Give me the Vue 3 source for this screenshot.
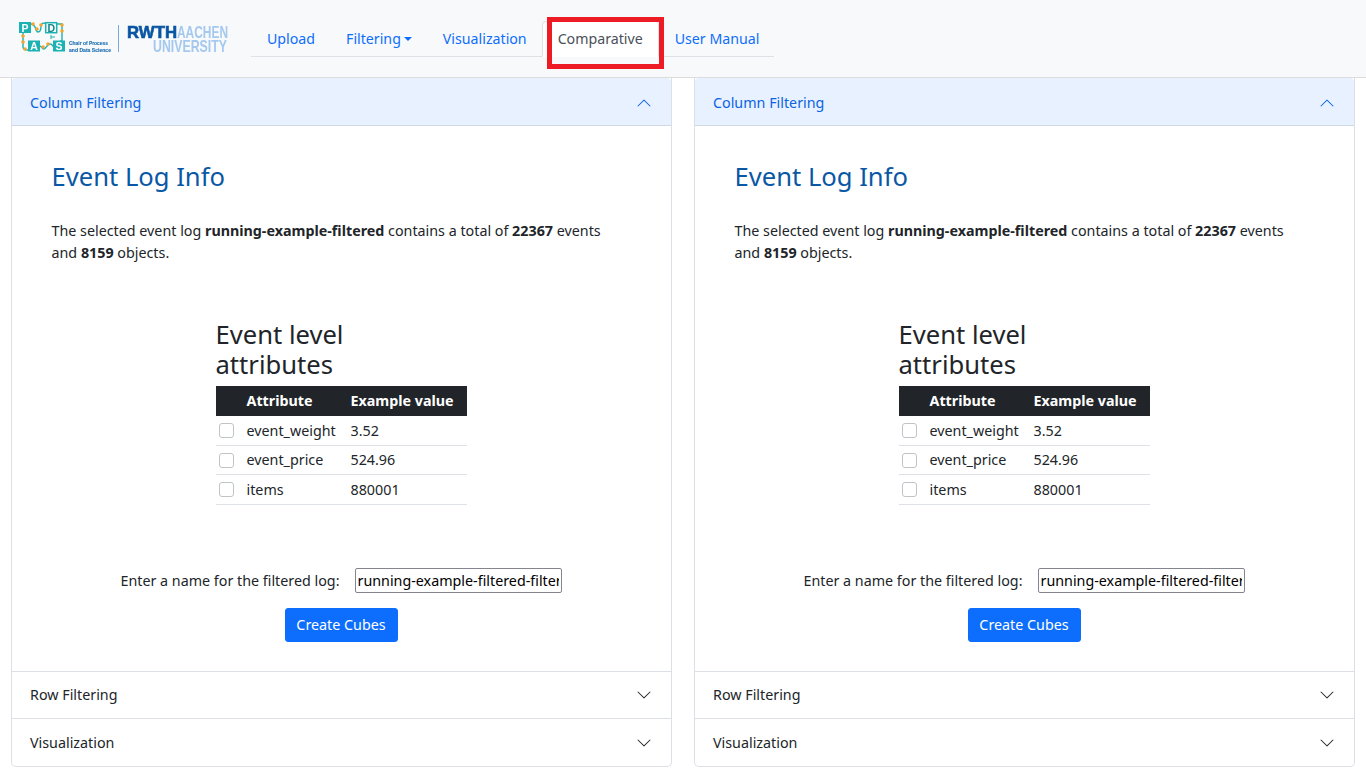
<script setup>
import { ref } from 'vue'

const panels = ref([0, 1])

const attributes = ref([
  { name: 'event_weight', value: '3.52' },
  { name: 'event_price', value: '524.96' },
  { name: 'items', value: '880001' }
])

const navLinks = ref([
  { label: 'Upload' },
  { label: 'Filtering', caret: true },
  { label: 'Visualization' },
  { label: 'Comparative', active: true },
  { label: 'User Manual' }
])

const dots = [
  [33, 24], [37, 29], [41, 25], [62, 25], [62, 31],
  [23, 36], [23, 42], [25, 49], [43, 47], [48, 44]
]
</script>

<template>
  <div class="page">
    <nav class="navbar">
      <svg class="brand" width="251" height="77" viewBox="0 0 251 77">
        <g fill="none" stroke="#1cb2b4" stroke-width="1.4">
          <path d="M31 24c2 0 3 1 4 3s1 5 3 5 3-3 3-6 2-3 5-3" />
          <path d="M57 24h5v17h-2" />
          <path d="M23 33v14c0 2 2 3 5 3" />
          <path d="M39 46c3 0 3 3 5 3s3-5 6-5 2 2 3 2" />
          <path d="M51 37h4M51 35v4" stroke-width="1" />
        </g>
        <rect x="19" y="22" width="12" height="11" fill="#1cb2b4" />
        <rect x="45.7" y="22.7" width="11" height="10" fill="#f4fbfb" stroke="#1cb2b4" stroke-width="1.5" />
        <rect x="28" y="40.5" width="12" height="11" fill="#1cb2b4" />
        <rect x="53" y="40.5" width="12" height="11" fill="#1cb2b4" />
        <circle v-for="d in dots" :key="d[0] + '-' + d[1]" :cx="d[0]" :cy="d[1]" r="1.8" fill="#f0a830" />
        <text x="25" y="31.5" class="pads-letter" fill="#fff">P</text>
        <text x="51.2" y="31.5" class="pads-letter" fill="#17868a">D</text>
        <text x="34" y="50" class="pads-letter" fill="#fff">A</text>
        <text x="59" y="50" class="pads-letter" fill="#fff">S</text>
        <text x="69" y="45" class="chair" textLength="39" lengthAdjust="spacingAndGlyphs">Chair of Process</text>
        <text x="69" y="52" class="chair" textLength="42" lengthAdjust="spacingAndGlyphs">and Data Science</text>
        <rect x="118" y="25" width="1" height="27" fill="#7aa9da" />
        <text x="127" y="37.5" class="rwth dark" textLength="50" lengthAdjust="spacingAndGlyphs">RWTH</text>
        <text x="177" y="37.5" class="rwth" textLength="51" lengthAdjust="spacingAndGlyphs">AACHEN</text>
        <text x="153" y="51.5" class="rwth" textLength="74" lengthAdjust="spacingAndGlyphs">UNIVERSITY</text>
      </svg>
      <ul class="tabs">
        <li v-for="link in navLinks" :key="link.label" class="tab" :class="{ active: link.active }">
          <a>{{ link.label }}<i v-if="link.caret" class="caret"></i></a>
        </li>
      </ul>
      <div class="highlight"></div>
    </nav>

    <main class="columns">
      <section v-for="panel in panels" :key="panel" class="accordion">
        <header class="acc-head open">
          <span>Column Filtering</span>
          <svg class="chev" width="16" height="16" viewBox="0 0 16 16" fill="#0c63e4">
            <path fill-rule="evenodd" d="M1.646 11.354a.5.5 0 0 0 .708 0L8 5.707l5.646 5.647a.5.5 0 0 0 .708-.708l-6-6a.5.5 0 0 0-.708 0l-6 6a.5.5 0 0 0 0 .708z" />
          </svg>
        </header>
        <div class="acc-body">
          <h2 class="title">Event Log Info</h2>
          <p class="summary">
            The selected event log <b>running-example-filtered</b> contains a total of <b>22367</b> events<br />
            and <b>8159</b> objects.
          </p>
          <div class="attrs">
            <h3>Event level<br />attributes</h3>
            <table>
              <thead>
                <tr>
                  <th class="check-col"></th>
                  <th class="name-col">Attribute</th>
                  <th>Example value</th>
                </tr>
              </thead>
              <tbody>
                <tr v-for="attr in attributes" :key="attr.name">
                  <td class="check-col"><input type="checkbox" class="check" /></td>
                  <td>{{ attr.name }}</td>
                  <td>{{ attr.value }}</td>
                </tr>
              </tbody>
            </table>
          </div>
          <div class="name-row">
            <label>Enter a name for the filtered log:</label>
            <input type="text" class="name-input" value="running-example-filtered-filtered" />
          </div>
          <div class="actions">
            <button class="create">Create Cubes</button>
          </div>
        </div>
        <header class="acc-head row">
          <span>Row Filtering</span>
          <svg class="chev" width="16" height="16" viewBox="0 0 16 16" fill="#212529">
            <path fill-rule="evenodd" d="M1.646 4.646a.5.5 0 0 1 .708 0L8 10.293l5.646-5.647a.5.5 0 0 1 .708.708l-6 6a.5.5 0 0 1-.708 0l-6-6a.5.5 0 0 1 0-.708z" />
          </svg>
        </header>
        <header class="acc-head last">
          <span>Visualization</span>
          <svg class="chev" width="16" height="16" viewBox="0 0 16 16" fill="#212529">
            <path fill-rule="evenodd" d="M1.646 4.646a.5.5 0 0 1 .708 0L8 10.293l5.646-5.647a.5.5 0 0 1 .708.708l-6 6a.5.5 0 0 1-.708 0l-6-6a.5.5 0 0 1 0-.708z" />
          </svg>
        </header>
      </section>
    </main>
  </div>
</template>

<style>
html, body {
  margin: 0;
  background: #fff;
  overflow: hidden;
}
</style>

<style scoped>
.page {
  font-family: "Noto Sans", sans-serif;
  font-size: 14.3px;
  line-height: 1.5;
  color: #212529;
  height: 768px;
  overflow: hidden;
}

.navbar {
  position: relative;
  display: flex;
  align-items: flex-start;
  height: 77px;
  background: #f8f9fa;
  border-bottom: 1px solid #dcdcdc;
}

.brand {
  flex: none;
  filter: blur(0.3px);
}

.pads-letter {
  font-family: "Liberation Sans", sans-serif;
  font-size: 10.5px;
  font-weight: 700;
  text-anchor: middle;
}

.chair {
  font-family: "Liberation Sans", sans-serif;
  font-size: 5.4px;
  font-weight: 700;
  fill: #2272b5;
  stroke: #2272b5;
  stroke-width: 0.15;
}

.rwth {
  font-family: "Liberation Sans", sans-serif;
  font-size: 17px;
  font-weight: 700;
  fill: #a4c8ee;
}

.rwth.dark {
  fill: #0a55a3;
  stroke: #0a55a3;
  stroke-width: 0.6;
}

.tabs {
  display: flex;
  list-style: none;
  margin: 21px 0 0;
  padding: 0;
  height: 36px;
  box-sizing: border-box;
  border-bottom: 1px solid #dee2e6;
  font-size: 14.2px;
}

.tab {
  height: 36px;
  box-sizing: border-box;
  padding: 6px 14px 6px 15px;
  color: #0d6efd;
  line-height: 21px;
  border: 1px solid transparent;
  border-radius: 4px 4px 0 0;
}

.tab.active {
  padding-right: 15px;
  color: #495057;
  background: #fff;
  border-color: #dee2e6 #dee2e6 #fff;
}

.caret {
  display: inline-block;
  margin-left: 3px;
  vertical-align: 3px;
  border-top: 4px solid;
  border-right: 4px solid transparent;
  border-left: 4px solid transparent;
}

.highlight {
  position: absolute;
  left: 547px;
  top: 17px;
  width: 117px;
  height: 52px;
  border: 5px solid #ed1c24;
  box-sizing: border-box;
}

.columns {
  display: grid;
  grid-template-columns: 661px 661px;
  column-gap: 22px;
  padding-left: 11px;
}

.accordion {
  border: 1px solid #dcdfe3;
  border-top: 0;
  border-radius: 0 0 5px 5px;
  height: 689px;
  box-sizing: border-box;
}

.acc-head {
  display: flex;
  align-items: center;
  justify-content: space-between;
  height: 47px;
  padding: 0 19px 0 18px;
  box-sizing: border-box;
  border-top: 1px solid #dcdfe3;
}

.acc-head.open {
  height: 48px;
  padding-top: 2px;
  color: #0c63e4;
  background: #e7f1ff;
  border-top: 0;
  border-bottom: 1px solid #cfd8e3;
  border-radius: 4px 4px 0 0;
}

.acc-head.row {
  padding-bottom: 1px;
}

.acc-head.row .chev {
  margin-top: 1px;
}

.acc-head.last {
  height: 48px;
}

.chev {
  flex: none;
}

.acc-body {
  height: 545px;
  box-sizing: border-box;
  padding: 32px 40.5px 0 39.5px;
}

.title {
  margin: 0;
  font-size: 25.6px;
  font-weight: 400;
  line-height: 38px;
  color: #0a58a5;
}

.summary {
  margin: 23.5px 0 0;
  line-height: 22.5px;
}

.attrs {
  width: 251px;
  margin: 55.5px auto 0;
}

.attrs h3 {
  margin: 0 0 6px;
  font-size: 25.6px;
  font-weight: 400;
  line-height: 30px;
}

table {
  width: 251px;
  border-collapse: collapse;
  font-size: 14.3px;
}

th {
  height: 30px;
  padding: 0 0 1px;
  box-sizing: border-box;
  background: #212529;
  color: #fff;
  font-weight: 700;
  text-align: left;
}

td {
  height: 29px;
  padding: 0;
  border-bottom: 1px solid #dee2e6;
}

tbody tr:nth-child(2) td {
  height: 28px;
}

.check-col {
  width: 31px;
}

.name-col {
  width: 104px;
}

.check {
  display: block;
  appearance: none;
  width: 15px;
  height: 15px;
  margin: 0 0 0 3px;
  border: 1px solid #bfc4c9;
  border-radius: 3px;
  background: #fff;
}

.name-row {
  display: flex;
  align-items: center;
  justify-content: center;
  gap: 15px;
  margin-top: 63px;
}

.name-input {
  width: 207px;
  height: 25px;
  padding: 1px 2px;
  box-sizing: border-box;
  border: 1px solid #85858f;
  border-radius: 2px;
  font-family: inherit;
  font-size: 14.3px;
  color: #000;
  background: #fff;
}

.actions {
  display: flex;
  justify-content: center;
  margin-top: 15px;
}

.create {
  height: 34px;
  width: 113px;
  padding: 0 0 1px;
  background: #0d6efd;
  border: 1px solid #0d6efd;
  border-radius: 3px;
  color: #fff;
  font-family: inherit;
  font-size: 14.3px;
}
</style>
